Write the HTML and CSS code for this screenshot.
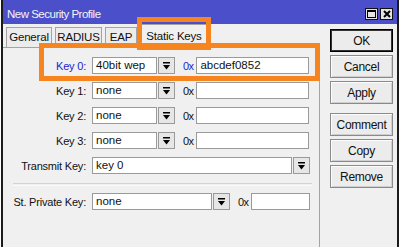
FILE: index.html
```html
<!DOCTYPE html>
<html lang="en">
<head>
    <meta charset="UTF-8" />
    <title>New Security Profile</title>
    <link rel="stylesheet" href="styles.css">
</head>
<body>
    <div class="window">
        <div class="titlebar">
            <span class="title">New Security Profile</span>
            <div class="win-buttons">
                <span class="win-btn">
                    <svg width="9" height="8" viewBox="0 0 9 8"><rect x="0.5" y="0.5" width="8" height="7" fill="none" stroke="#000"/><rect x="0" y="0" width="9" height="2" fill="#000"/></svg>
                </span>
                <span class="win-btn">
                    <svg width="8" height="8" viewBox="0 0 8 8"><path d="M1 1L7 7M7 1L1 7" stroke="#000" stroke-width="2"/></svg>
                </span>
            </div>
        </div>

        <div class="dialog">
            <div class="main">
                <div class="tabs">
                    <div class="tab tab-general">General</div>
                    <div class="tab tab-radius">RADIUS</div>
                    <div class="tab tab-eap">EAP</div>
                    <div class="tab tab-keys active">Static Keys</div>
                </div>

                <div class="page">
                    <div class="row selected">
                        <span class="label">Key 0:</span>
                        <div class="field key-type">40bit wep</div>
                        <div class="drop"><svg width="7" height="8" viewBox="0 0 7 8"><rect width="7" height="1.5"/><path d="M0 3h7L3.5 7.5z"/></svg></div>
                        <span class="hex">0x</span>
                        <div class="field key-value">abcdef0852</div>
                    </div>
                    <div class="row">
                        <span class="label">Key 1:</span>
                        <div class="field key-type">none</div>
                        <div class="drop"><svg width="7" height="8" viewBox="0 0 7 8"><rect width="7" height="1.5"/><path d="M0 3h7L3.5 7.5z"/></svg></div>
                        <span class="hex">0x</span>
                        <div class="field key-value"></div>
                    </div>
                    <div class="row">
                        <span class="label">Key 2:</span>
                        <div class="field key-type">none</div>
                        <div class="drop"><svg width="7" height="8" viewBox="0 0 7 8"><rect width="7" height="1.5"/><path d="M0 3h7L3.5 7.5z"/></svg></div>
                        <span class="hex">0x</span>
                        <div class="field key-value"></div>
                    </div>
                    <div class="row">
                        <span class="label">Key 3:</span>
                        <div class="field key-type">none</div>
                        <div class="drop"><svg width="7" height="8" viewBox="0 0 7 8"><rect width="7" height="1.5"/><path d="M0 3h7L3.5 7.5z"/></svg></div>
                        <span class="hex">0x</span>
                        <div class="field key-value"></div>
                    </div>
                    <div class="row">
                        <span class="label">Transmit Key:</span>
                        <div class="field transmit">key 0</div>
                        <div class="drop"><svg width="7" height="8" viewBox="0 0 7 8"><rect width="7" height="1.5"/><path d="M0 3h7L3.5 7.5z"/></svg></div>
                    </div>

                    <div class="separator"></div>

                    <div class="row">
                        <span class="label">St. Private Key:</span>
                        <div class="field private-type">none</div>
                        <div class="drop"><svg width="7" height="8" viewBox="0 0 7 8"><rect width="7" height="1.5"/><path d="M0 3h7L3.5 7.5z"/></svg></div>
                        <span class="hex">0x</span>
                        <div class="field private-value"></div>
                    </div>
                </div>
            </div>

            <div class="side">
                <button class="btn default">OK</button>
                <button class="btn">Cancel</button>
                <button class="btn">Apply</button>
                <button class="btn spaced">Comment</button>
                <button class="btn">Copy</button>
                <button class="btn">Remove</button>
            </div>
        </div>

        <!-- orange highlight marks drawn over the dialog -->
        <div class="mark mark-tab"></div>
        <div class="mark mark-row"></div>
    </div>
</body>
</html>
```

FILE: styles.css
```css
body {
    margin: 0;
    background: #fff;
    font-family: "Liberation Sans", Arial, sans-serif;
    font-size: 11px;
    letter-spacing: -0.2px;
    color: #111;
}

.window {
    position: relative;
    width: 394px;
    height: 247px;
    margin-left: 1px;
    border-left: 2px solid #1b1b1b;
    border-right: 2px solid #1b1b1b;
    background: #f0f0f0;
    overflow: hidden;
}

.titlebar {
    display: flex;
    justify-content: space-between;
    align-items: flex-start;
    height: 24px;
    background: #4b4fc9;
}

.title {
    padding: 6px 0 0 4px;
    line-height: 16px;
    font-size: 11.5px;
    color: #f4f4f4;
    letter-spacing: -0.5px;
}

.win-buttons {
    display: flex;
    gap: 2px;
    margin: 8px 4px 0 0;
}

.win-btn {
    display: flex;
    justify-content: center;
    align-items: center;
    width: 13px;
    height: 12px;
    box-sizing: border-box;
    border: 1px solid #111;
    background: #e4e4e4;
}

.dialog {
    display: flex;
}

.main {
    width: 317px;
}

.tabs {
    display: flex;
    align-items: flex-end;
    height: 23px;
    padding-left: 3px;
}

.tab {
    height: 20px;
    box-sizing: border-box;
    margin-right: 3px;
    border: 1px solid #a3a3a3;
    border-bottom: none;
    line-height: 19px;
    text-align: center;
    font-size: 11.5px;
    background: #ececec;
}

.tab-general {
    width: 46px;
}

.tab-radius {
    width: 47px;
}

.tab-eap {
    width: 32px;
}

.tab-keys {
    width: 66px;
}

.tab.active {
    position: relative;
    height: 24px;
    margin-left: 1px;
    margin-bottom: -1px;
    line-height: 22px;
    background: #f0f0f0;
}

.page {
    height: 200px;
    padding-top: 9px;
    border-top: 1px solid #a3a3a3;
    border-right: 1px solid #a3a3a3;
}

.row {
    display: flex;
    align-items: center;
    height: 17px;
    margin-bottom: 8px;
}

.label {
    width: 83px;
    margin-right: 6px;
    text-align: right;
}

.row.selected .label,
.row.selected .hex {
    color: #2424d6;
}

.field {
    height: 17px;
    box-sizing: border-box;
    padding-left: 3px;
    border: 1px solid #9a9a9a;
    background: #fff;
    line-height: 15px;
    font-size: 11.5px;
    letter-spacing: 0;
    white-space: nowrap;
}

.key-type {
    width: 65px;
}

.key-value {
    width: 113px;
}

.transmit {
    width: 200px;
}

.private-type {
    width: 120px;
}

.private-value {
    width: 59px;
}

.drop {
    display: flex;
    justify-content: center;
    align-items: center;
    width: 17px;
    height: 17px;
    box-sizing: border-box;
    margin-left: 1px;
    border: 1px solid #9a9a9a;
    background: #e6e6e6;
}

.hex {
    margin: 0 3px 0 8px;
    letter-spacing: -0.6px;
}

.separator {
    height: 1px;
    margin: 9px 7px 7px 10px;
    border-top: 1px solid #d2d2d2;
    border-bottom: 1px solid #fafafa;
}

.side {
    display: flex;
    flex-direction: column;
    padding: 5px 0 0 10px;
}

.btn {
    width: 63px;
    height: 23px;
    margin-bottom: 3px;
    padding: 0;
    border: 1px solid #8a8a8a;
    background: #ececec;
    box-shadow: inset 1px 1px #fdfdfd, inset -1px -1px #cfcfcf;
    font-family: inherit;
    font-size: 12px;
    letter-spacing: -0.3px;
    color: #111;
}

.btn.default {
    border-color: #000;
    box-shadow: inset 0 0 0 1px #333;
}

.btn.spaced {
    margin-top: 6px;
}

.mark {
    position: absolute;
    box-sizing: border-box;
    border: 5px solid #f6841f;
}

.mark-tab {
    left: 134px;
    top: 17px;
    width: 74px;
    height: 33px;
}

.mark-row {
    left: 36px;
    top: 43px;
    width: 281px;
    height: 38px;
}
```
